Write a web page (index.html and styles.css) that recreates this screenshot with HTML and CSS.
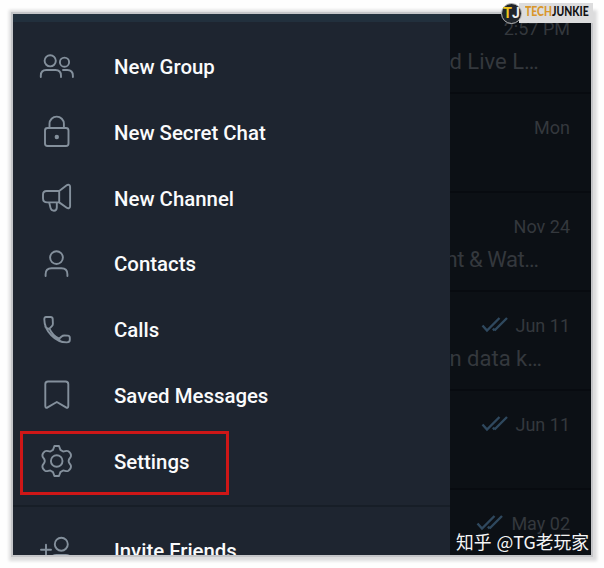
FILE: index.html
```html
<!DOCTYPE html>
<html lang="en">
<head>
<meta charset="utf-8">
<title>Messenger menu</title>
<link rel="stylesheet" href="styles.css">
</head>
<body>
<svg class="defs" aria-hidden="true">
  <symbol id="checks" viewBox="0 0 28 18"><path d="M1.5 9.5 6 14.5 18.5 2M13.5 14.5 26 2M12 12.5l1.5 2"/></symbol>
</svg>
<main class="screen">
  <nav class="drawer">
    <div class="profile"></div>
    <a class="item"><svg class="icon" viewBox="0 0 40 40"><circle cx="17.200" cy="13.800" r="5.600"/><circle cx="31.500" cy="15.200" r="4.600"/><path d="M7.800 30v-1.300c0-3.600 2-5.700 5.400-5.700h9.200c3.400 0 5.600 2.100 5.600 5.700V30M30 23h4.200c3.600 0 5.700 2.200 5.700 5.700V30"/></svg><span>New Group</span></a>
    <a class="item"><svg class="icon" viewBox="0 0 40 40"><rect x="12" y="15" width="23.500" height="18" rx="2.500"/><path d="M16.500 15v-4.200a7.200 7.200 0 0 1 14.400 0V15"/><circle class="dot" cx="23.800" cy="24" r="2.200"/></svg><span>New Secret Chat</span></a>
    <a class="item"><svg class="icon" viewBox="0 0 40 40"><path d="M13.600 12h12.600l7.500-5.700c1.600-1.200 3.400-.4 3.400 1.500v19.400c0 1.900-1.800 2.700-3.400 1.500l-7.500-5.300H14.200c-2.500 0-4.200-1.700-4.200-4.200v-3.500c0-2.200 1.500-3.700 3.600-3.700zM26.200 12v11.400M16.200 23.500l1.300 5.400c.5 2 1.700 2.800 3.400 2.800 1.800 0 2.900-1.300 2.900-3.200v-5"/></svg><span>New Channel</span></a>
    <a class="item"><svg class="icon" viewBox="0 0 40 40"><circle cx="23.500" cy="13.600" r="6.400"/><path d="M12.600 32v-1.800c0-3.700 2.300-6 6-6h9.800c3.700 0 6 2.300 6 6V32"/></svg><span>Contacts</span></a>
    <a class="item"><svg class="icon" viewBox="0 0 40 40"><path d="M13 7h4.600c1.200 0 2 .7 2.100 1.900l.2 4.800c0 1-.3 1.800-1 2.500l-2.500 2.400c2 4.400 5.200 7.900 9.700 10.100l2.500-2.200c.8-.7 1.600-1 2.700-1l3.500.1c1.200.1 2 1 2 2.200v2.300c0 1.700-1.100 2.300-3 2.300C22.500 32.300 11.300 21.100 11.300 9.200 11.300 7.900 11.900 7 13 7zM12.300 16.800c1 1.500 2.300 2.200 4.100 1.800M26.100 28.700c.2 1.900 1.200 3.200 3.100 3.400"/></svg><span>Calls</span></a>
    <a class="item"><svg class="icon" viewBox="0 0 40 40"><path d="M15 5.500h17.500c1.800 0 2.800 1 2.800 2.800V30c0 1.600-1 2.200-2.300 1.400L23.800 26l-9.200 5.400c-1.300.8-2.300.2-2.300-1.400V8.300c0-1.800 1-2.800 2.700-2.800z"/></svg><span>Saved Messages</span></a>
    <a class="item selected"><svg class="icon" viewBox="0 0 40 40"><path d="M21.400 4h4.600l1.400 3.900 2.700 1.600c2 .1 3.300-1.400 5.300-.2 1.500 1 2.700 3 2.600 4.600-.1 1.700-2 2.700-2.300 4.400v1.400c.3 1.700 2.200 2.700 2.300 4.400.1 1.600-1.100 3.600-2.600 4.600-2 1.200-3.300-.3-5.300-.2l-2.700 1.600L26 34h-4.600L20 30.100l-2.700-1.600c-2-.1-3.300 1.400-5.300.2-1.500-1-2.700-3-2.600-4.600.1-1.700 2-2.700 2.300-4.400v-1.400c-.3-1.700-2.200-2.700-2.300-4.400-.1-1.600 1.100-3.600 2.600-4.600 2-1.200 3.300.3 5.300.2L20 7.900z"/><circle cx="23.700" cy="19" r="5.800"/></svg><span>Settings</span></a>
    <hr class="divider">
    <a class="item invite"><svg class="icon" viewBox="0 0 40 40"><circle cx="28.300" cy="13.200" r="6.500"/><path d="M8 18.800h10M13 13.800v10M17.500 32v-1.500c0-4 2.300-6.500 6-6.500h9.200c3.700 0 6 2.500 6 6.500V32"/></svg><span>Invite Friends</span></a>
  </nav>
  <section class="chats">
    <article class="chat"><div class="time">2:57 PM</div><div class="message">d Live L…</div></article>
    <article class="chat"><div class="time">Mon</div></article>
    <article class="chat"><div class="time">Nov 24</div><div class="message clipped">nt &amp; Wat…</div></article>
    <article class="chat"><div class="time"><svg class="checks"><use href="#checks"/></svg>Jun 11</div><div class="message">n data k…</div></article>
    <article class="chat"><div class="time"><svg class="checks"><use href="#checks"/></svg>Jun 11</div></article>
    <article class="chat"><div class="time"><svg class="checks"><use href="#checks"/></svg>May 02</div></article>
  </section>
</main>
<div class="brand">
  <div class="emblem"><span class="t">T</span><span>J</span></div>
  <div class="name"><span class="tech">TECH</span><span>JUNKIE</span></div>
</div>
<div class="credit">知乎 @TG老玩家</div>
</body>
</html>
```

FILE: styles.css
```css
* { box-sizing: border-box; }
body {
  margin: 0;
  width: 604px;
  height: 568px;
  padding: 14px 0 0 13px;
  background: #fefefe;
  overflow: hidden;
  position: relative;
  font-family: Roboto, sans-serif;
}
.defs { position: absolute; width: 0; height: 0; }
.screen {
  display: flex;
  width: 578px;
  height: 541px;
  overflow: hidden;
  background: #0c1015;
  box-shadow: 0 0 0 2px #c4c5c8, 1px 1px 3px 5px #dcdcdd;
}
.drawer {
  flex: none;
  width: 436.5px;
  background: #1e2530;
}
.profile { height: 8px; background: #22303d; }
.item {
  display: flex;
  align-items: center;
  height: 65.85px;
  padding-left: 20px;
  color: #fafbfc;
  font-size: 20.4px;
  font-weight: 500;
  line-height: 24px;
}
.item:first-of-type { margin-top: 12px; }
.item span { margin-left: 41px; }
.icon {
  flex: none;
  width: 40px;
  height: 40px;
  overflow: visible;
  fill: none;
  stroke: #84909c;
  stroke-width: 1.9;
  stroke-linecap: round;
  stroke-linejoin: round;
}
.icon .dot { fill: #84909c; stroke: none; }
.selected {
  width: 209px;
  height: 64px;
  margin: 2px 0 0 7px;
  padding: 0 0 2px 10px;
  border: 3px solid #ce1717;
}
.divider { height: 2px; margin: 10px 0 11px; border: 0; background: #171e27; }
.chats { flex: 1; margin-top: -19px; overflow: hidden; }
.chat {
  height: 99px;
  padding: 21px 21px 0 0;
  border-bottom: 2px solid #080b10;
  color: #34383d;
}
.time {
  display: flex;
  justify-content: flex-end;
  align-items: center;
  height: 24px;
  font-size: 18px;
}
.checks {
  width: 28px;
  height: 18px;
  margin-right: 7px;
  fill: none;
  stroke: #2f485e;
  stroke-width: 2.4;
}
.message { margin-top: 9px; font-size: 22px; line-height: 26px; white-space: nowrap; }
.clipped { margin-left: -4px; letter-spacing: -.45px; }
.brand {
  position: absolute;
  left: 501px;
  top: 3px;
  display: flex;
  align-items: center;
  width: 92px;
  height: 20px;
  background: linear-gradient(90deg, transparent 18px, #dcdcdd 18px);
  color: #111;
  font: 900 12.4px/18px Lato, sans-serif;
}
.name {
  padding-bottom: 2px;
  transform: scaleX(.84);
  transform-origin: left;
}
.emblem {
  display: flex;
  justify-content: center;
  align-items: center;
  flex: none;
  width: 21px;
  height: 21px;
  margin-right: 3px;
  border: 1px solid #b8b8b8;
  border-radius: 50%;
  background: #20252b;
  color: #eee;
  font: 700 14px/18px Roboto, sans-serif;
}
.emblem .t { color: #f2c51d; }
.tech { color: #d9972b; }
.credit {
  position: absolute;
  left: 456px;
  top: 528px;
  color: #f5f5f5;
  font: 17.8px/26px "Noto Sans CJK SC", sans-serif;
  word-spacing: 1px;
  white-space: nowrap;
}
```
